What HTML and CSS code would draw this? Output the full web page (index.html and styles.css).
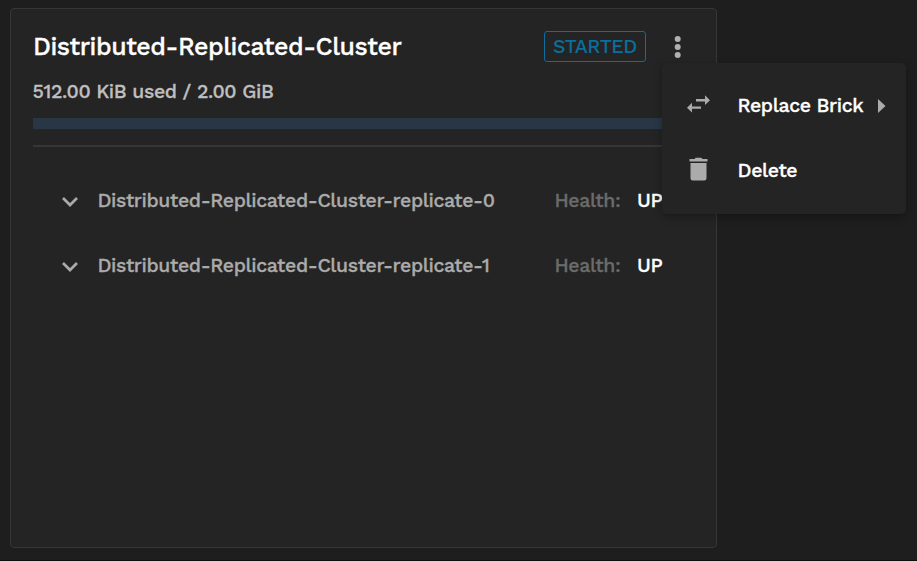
FILE: index.html
```html
<!DOCTYPE html>
<html lang="en">
<head>
<meta charset="utf-8">
<title>Distributed-Replicated-Cluster</title>
<link rel="stylesheet" href="styles.css">
</head>
<body>
<main class="card">
  <header class="head">
    <h1 class="title">Distributed-Replicated-Cluster</h1>
    <span class="status"><span class="status-text">STARTED</span></span>
    <button class="more" aria-label="More">
      <svg width="8" height="24" viewBox="0 0 8 24"><circle cx="3.700" cy="4" r="3"/><circle cx="3.700" cy="12" r="3"/><circle cx="3.700" cy="20" r="3"/></svg>
    </button>
    <div class="menu">
      <div class="item">
        <svg class="icon" width="26" height="26" viewBox="0 0 26 26"><path d="M1 14.700 6 9.700v3.700h9v2.400H6v3.700zM24 7.300l-5-5v3.700h-9v2.400h9v3.700z"/></svg>
        <span class="label replace">Replace Brick</span>
        <svg class="caret" width="8" height="14" viewBox="0 0 8 14"><path d="M0 0 7.500 7 0 14z"/></svg>
      </div>
      <div class="item">
        <svg class="icon" width="26" height="30" viewBox="0 0 26 30"><path d="M4.500 7h16v15.300q0 2.200-2.200 2.200H6.700Q4.500 24.500 4.500 22.300zM3.500 3h5l1.200-1.200h5.600L16.500 3h5v2.500h-18z"/></svg>
        <span class="label delete">Delete</span>
      </div>
    </div>
  </header>
  <p class="usage">512.00 KiB used / 2.00 GiB</p>
  <div class="bar"></div>
  <hr class="rule">
  <section class="groups">
    <div class="row">
      <svg class="chevron" width="16" height="12" viewBox="0 0 16 12"><path d="m1 2 7 7 7-7"/></svg>
      <span class="name first">Distributed-Replicated-Cluster-replicate-0</span>
      <span class="health">Health:</span>
      <span class="state">UP</span>
    </div>
    <div class="row">
      <svg class="chevron" width="16" height="12" viewBox="0 0 16 12"><path d="m1 2 7 7 7-7"/></svg>
      <span class="name second">Distributed-Replicated-Cluster-replicate-1</span>
      <span class="health">Health:</span>
      <span class="state">UP</span>
    </div>
  </section>
</main>
</body>
</html>
```
FILE: styles.css
```css
* { box-sizing: border-box; }
body {
  margin: 0;
  height: 561px;
  padding: 8px 10px;
  overflow: hidden;
  background: #1e1e1e;
  border-bottom: 1px solid #0e0e0e;
  color: #fff;
  font: 500 19.5px/24px "Work Sans", Inter, sans-serif;
  letter-spacing: -.38px;
  -webkit-text-stroke: .3px currentColor;
  white-space: nowrap;
}
.card {
  width: 707px;
  height: 540px;
  padding: 22px;
  background: #242424;
  border: 1px solid #363636;
  border-radius: 4px;
}
.head {
  position: relative;
  display: flex;
  align-items: center;
  height: 31px;
}
.title {
  width: 511px;
  margin: 0;
  font-size: 25px;
  line-height: 31px;
  font-weight: 500;
  letter-spacing: -.46px;
}
.status {
  width: 102px;
  height: 31px;
  padding-left: 8px;
  border: 1px solid #0b6e9c;
  border-radius: 3px;
  color: #0b6e9c;
  line-height: 30px;
  -webkit-text-stroke-width: 0;
}
.more {
  display: flex;
  margin: 1px 0 0 28px;
  padding: 0;
  border: 0;
  background: none;
  fill: #b0b0b0;
}
.menu {
  position: absolute;
  left: 629px;
  top: 32px;
  width: 244px;
  height: 151px;
  padding: 10px 20px 0 24px;
  background: #242424;
  border-radius: 5px;
  box-shadow: 0 3px 8px rgba(0, 0, 0, .3);
}
.item {
  display: flex;
  align-items: center;
  height: 65px;
}
.icon { fill: #ababab; }
.label { width: 140.5px; margin-left: 25.5px; padding-top: 1px; }
.caret { fill: #ababab; }
.usage {
  margin: 18px 0 0 -.5px;
  color: #bfbfbf;
}
.bar {
  height: 11px;
  margin-top: 14px;
  background: #283645;
}
.rule {
  height: 2px;
  margin: 16px 0 0;
  border: 0;
  background: #363636;
}
.groups { padding: 21px 0 0 29px; }
.row {
  display: flex;
  align-items: center;
  height: 65px;
  padding-top: 1px;
  color: #ababab;
}
.chevron {
  margin: 2px 19.5px 0 0;
  fill: none;
  stroke: #ababab;
  stroke-width: 2.700;
}
.name { width: 457px; }
.health { width: 82.5px; color: #6b6b6b; }
.state { color: #fff; }
```
